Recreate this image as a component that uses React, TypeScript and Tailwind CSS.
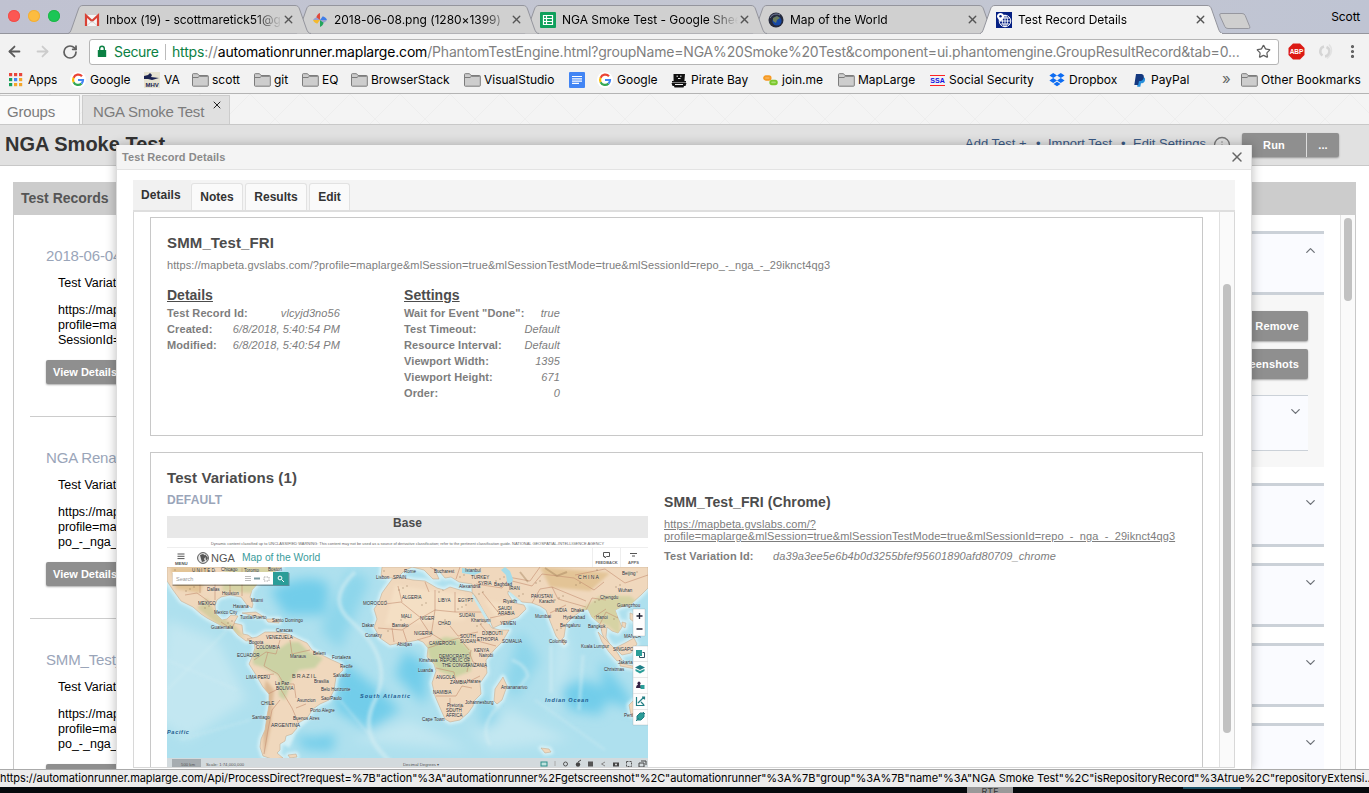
import React from "react";
import { ArrowLeft, ArrowRight, RotateCw, Star, MoreVertical, ChevronDown, ChevronUp, X, Info } from "lucide-react";

const ui = "font-['Inter','Noto_Sans',sans-serif]";

function TabShape({ active }: { active?: boolean }) {
  return (
    <svg className="absolute left-0 top-0 h-[30px] w-[244px]" viewBox="0 0 244 30">
      <path
        d="M0 28.5 C2 28 2.5 26.5 3.5 24 L10.5 4 C11.5 1.5 12.5 .5 15 .5 H227 C229.500 .5 230.500 1.500 231.500 4 L238.500 24 C239.500 26.500 240.500 28.500 243 28.500"
        fill={active ? "#f2f2f2" : "#d0d0d0"}
        stroke="#94959d"
      />
      {active && <path d="M1 29h241" stroke="#f2f2f2" strokeWidth="2" />}
    </svg>
  );
}

type TabProps = { z: string; title: string; icon: React.ReactNode; active?: boolean };
function BrowserTab({ z, title, icon, active }: TabProps) {
  return (
    <div className={`relative h-[30px] w-[228px] shrink-0 ${z}`}>
      <TabShape active={active} />
      <div className="relative flex h-[29px] items-center pl-[16px]">
        <span className="flex w-[22px] shrink-0">{icon}</span>
        <span className="w-[176px] shrink-0 overflow-hidden whitespace-nowrap text-[12px] leading-[16px] tracking-[-0.03px] text-black [mask-image:linear-gradient(90deg,#000_84%,transparent)]">
          {title}
        </span>
        <X className="size-[13px] shrink-0 text-[#555]" strokeWidth={2.5} />
      </div>
    </div>
  );
}

const Gmail = () => (
  <svg width="16" height="16" viewBox="0 0 16 16">
    <path d="M1 3h14v11H1z" fill="#f5f5f5" />
    <path d="M2 14V3.500l6 5.500 6-5.500V14" fill="none" stroke="#d94235" strokeWidth="2.200" />
    <path d="M3 13.500L8 9l5 4.500" fill="none" stroke="#c9c9c9" strokeWidth=".8" />
  </svg>
);
const Pinwheel = () => (
  <svg width="16" height="16" viewBox="0 0 16 16">
    <path d="M8 1v7L4.300 5.200C5 3 6.300 1.600 8 1z" fill="#e04a3a" />
    <path d="M15 8H8l2.800-3.700C13 5 14.400 6.300 15 8z" fill="#3f7de8" />
    <path d="M8 15V8l3.700 2.800C11 13 9.700 14.400 8 15z" fill="#22a45c" />
    <path d="M1 8h7l-2.800 3.700C3 11 1.600 9.700 1 8z" fill="#f4b92e" />
    <path d="M8 8L4.300 5.200Q2 6.500 1 8zM8 8l3.700 2.800Q14 9.500 15 8z" fill="#5f6fd0" opacity=".5" />
  </svg>
);
const Sheet = () => (
  <svg width="16" height="16" viewBox="0 0 16 16">
    <rect width="16" height="16" rx="1" fill="#10a05c" />
    <path d="M3.500 3.500h9v9h-9zM3.500 6.500h9M3.500 9.500h9M6.500 3.500v9" fill="none" stroke="#fff" strokeWidth="1.200" />
  </svg>
);
const Planet = () => (
  <svg width="16" height="16" viewBox="0 0 16 16">
    <circle cx="8" cy="8" r="7.500" fill="#252a3c" />
    <circle cx="9" cy="9" r="4.600" fill="#1647a3" />
    <path d="M5 6l4-2 3 2-3 2-1 3-3-2z" fill="#6b7c5d" />
    <path d="M2 6C4 2 9 1 12 3" fill="none" stroke="#7882a3" />
  </svg>
);
const PinGlobe = () => (
  <svg width="16" height="16" viewBox="0 0 16 16">
    <rect width="16" height="16" fill="#062083" />
    <g fill="none" stroke="#fff" strokeWidth=".9">
      <circle cx="9" cy="9" r="5.800" />
      <path d="M3.500 9h11.500M4.500 12h9M5 6h9M9 3v12M9 3c-3.500 3-3.500 9 0 12M9 3c3.500 3 3.500 9 0 12" />
    </g>
    <path d="M4.500 1C2.500 1 1 2.500 1 4.300 1 6.500 4.500 9.500 4.500 9.500S8 6.500 8 4.300C8 2.500 6.500 1 4.500 1z" fill="#fff" />
    <circle cx="4.500" cy="4.300" r="1.200" fill="#062083" />
  </svg>
);
const GoogleG = () => (
  <svg width="16" height="16" viewBox="0 0 16 16">
    <circle cx="8" cy="8" r="8" fill="#fff" />
    <g fill="none" strokeWidth="2.200">
      <path d="M12 4.300A5 5 0 0 0 3.600 5.800" stroke="#ea4335" />
      <path d="M3.600 5.800a5 5 0 0 0 0 4.400" stroke="#fbbc05" />
      <path d="M3.600 10.200A5 5 0 0 0 11.500 11.600" stroke="#34a853" />
      <path d="M8 8h5a5 5 0 0 1-1.500 3.600" stroke="#4285f4" />
    </g>
  </svg>
);
const Folder = () => (
  <svg width="17" height="14" viewBox="0 0 17 14">
    <path d="M.5 12.500V1.500q0-.8.800-.8H5.500L7 2.500h8.500q.8 0 .8.800v9.200q0 .7-.8.700H1.300q-.8 0-.8-.7z" fill="#cdcdcd" stroke="#7c7c7c" />
    <path d="M1 4.500h5L7.300 3.300h8.500" fill="none" stroke="#7c7c7c" />
  </svg>
);
const AppsGrid = () => (
  <svg width="14" height="14" viewBox="0 0 14 14">
    {["#e8453c", "#e8453c", "#e8453c", "#19a05b", "#4285f4", "#f4a62a", "#19a05b", "#f4a62a", "#f4a62a"].map((c, i) => (
      <rect key={i} x={(i % 3) * 5} y={Math.floor(i / 3) * 5} width="3.200" height="3.200" fill={c} />
    ))}
  </svg>
);
const Mhv = () => (
  <svg width="16" height="16" viewBox="0 0 16 16">
    <rect width="16" height="16" fill="#e6e3d2" />
    <path d="M0 4l4-1 2-2 2 2-1 2 8 1-7 2-4-1-4 0z" fill="#1b2350" />
    <text x="1.500" y="14.500" fontSize="6" fontWeight="700" fontFamily="Liberation Sans" fill="#1b2350">MHV</text>
  </svg>
);
const DocIcon = () => (
  <svg width="16" height="16" viewBox="0 0 16 16">
    <rect width="16" height="16" rx="1" fill="#4285f4" />
    <path d="M3 4.500h10M3 6.800h10M3 9.100h10M3 11.400h7" stroke="#fff" strokeWidth="1.200" />
  </svg>
);
const Ship = () => (
  <svg width="16" height="15" viewBox="0 0 16 15">
    <path d="M2.500 1h11.500l-.6 7H2.600zM1 8h14v1.500H1zM.5 10h15l-1 3H13l-.5 1.500H3.500L3 13H1.500z" fill="#111" />
    <path d="M5.500 3.200h1.500M9 3.200h1.500M7 5.500h2.500M4 11.500h8" stroke="#f2f2f2" />
  </svg>
);
const JoinMe = () => (
  <svg width="15" height="11" viewBox="0 0 15 11">
    <rect x="1.100" y="1.300" width="6.500" height="3.400" rx="1.700" fill="#f9b45f" stroke="#f59a23" strokeWidth="1.900" />
    <rect x="7.300" y="5.600" width="6.500" height="3.600" rx="1.700" fill="#a9dd70" stroke="#7bc72c" strokeWidth="1.900" />
  </svg>
);
const Ssa = () => (
  <span className="flex h-[11px] w-[15px] items-center justify-center border-y border-[#f22] text-[7px] font-bold leading-[7px] text-[#1010e0] font-['Liberation_Sans',sans-serif]">
    SSA
  </span>
);
const Dropbox = () => (
  <svg width="16" height="14" viewBox="0 0 16 14" fill="#0d6cf2">
    <path d="M4.200 0L8 2.500 4.200 5 .4 2.500zM11.800 0l3.800 2.500L11.800 5 8 2.500zM4.200 5L8 7.500 4.200 10 .4 7.500zM11.800 5l3.800 2.500-3.800 2.500L8 7.500zM4.500 11L8 8.700 11.500 11 8 13.300z" />
  </svg>
);
const Paypal = () => (
  <svg width="12" height="13" viewBox="0 0 12 13">
    <path d="M4 3h5c2 .3 2.500 2 1.800 4C10.200 8.800 9 9.300 7 9.300L6.300 12.800H3.200z" fill="#2790dc" />
    <path d="M2 0h5.500C9.500.3 10.200 1.800 9.700 4 9 6.500 7.500 7 5 7l-.8 4H.3z" fill="#14387f" />
  </svg>
);

type BM = { label: string; icon: React.ReactNode; gap: string; w: string };
const bookmarks: BM[] = [
  { label: "Apps", icon: <AppsGrid />, gap: "gap-[5px]", w: "w-[61px]" },
  { label: "Google", icon: <GoogleG />, gap: "gap-[4px]", w: "w-[74px]" },
  { label: "VA", icon: <Mhv />, gap: "gap-[4px]", w: "w-[48px]" },
  { label: "scott", icon: <Folder />, gap: "gap-[3px]", w: "w-[62px]" },
  { label: "git", icon: <Folder />, gap: "gap-[3px]", w: "w-[48px]" },
  { label: "EQ", icon: <Folder />, gap: "gap-[3px]", w: "w-[49px]" },
  { label: "BrowserStack", icon: <Folder />, gap: "gap-[3px]", w: "w-[113px]" },
  { label: "VisualStudio", icon: <Folder />, gap: "gap-[3px]", w: "w-[105px]" },
  { label: "", icon: <DocIcon />, gap: "", w: "w-[28px]" },
  { label: "Google", icon: <GoogleG />, gap: "gap-[4px]", w: "w-[74px]" },
  { label: "Pirate Bay", icon: <Ship />, gap: "gap-[4px]", w: "w-[92px]" },
  { label: "join.me", icon: <JoinMe />, gap: "gap-[4px]", w: "w-[75px]" },
  { label: "MapLarge", icon: <Folder />, gap: "gap-[3px]", w: "w-[92px]" },
  { label: "Social Security", icon: <Ssa />, gap: "gap-[4px]", w: "w-[119px]" },
  { label: "Dropbox", icon: <Dropbox />, gap: "gap-[4px]", w: "w-[85px]" },
  { label: "PayPal", icon: <Paypal />, gap: "gap-[5px]", w: "w-[87px]" },
];

function Chrome() {
  return (
    <header className={`${ui} shrink-0`}>
      <div className="relative flex h-[34px] items-start bg-[linear-gradient(100deg,#c0c2d1,#c4c7d2_60%,#bfc4d3)] pt-[5px] shadow-[inset_0_-1px_#94959d]">
        <div className="flex w-[68px] shrink-0 gap-[8px] pl-[8px] pt-[5px]">
          <i className="size-[12px] rounded-full bg-[#fc5753] ring-1 ring-inset ring-[#f04f4b]" />
          <i className="size-[12px] rounded-full bg-[#fdbc40] ring-1 ring-inset ring-[#f0ae3a]" />
          <i className="size-[12px] rounded-full bg-[#1bc656] ring-1 ring-inset ring-[#1fb849]" />
        </div>
        <BrowserTab z="z-[4]" title="Inbox (19) - scottmaretick51@gmail" icon={<Gmail />} />
        <BrowserTab z="z-[3]" title="2018-06-08.png (1280×1399)" icon={<Pinwheel />} />
        <BrowserTab z="z-[2]" title="NGA Smoke Test - Google Sheets" icon={<Sheet />} />
        <BrowserTab z="z-[1]" title="Map of the World" icon={<Planet />} />
        <BrowserTab z="z-[5]" title="Test Record Details" icon={<PinGlobe />} active />
        <svg className="ml-[10px] mt-[7px] h-[18px] w-[36px]" viewBox="0 0 36 18">
          <path d="M3 1.500H24q2.500 0 3.200 2l4.500 11q.8 2-1 2H10q-2.500 0-3.200-2L2 4Q1 1.500 3 1.500z" fill="#cfcfcf" stroke="#96979f" />
        </svg>
        <span className="ml-auto mr-[9px] mt-[4px] text-[12px] leading-[16px] tracking-[-0.1px]">Scott</span>
      </div>
      <div className="flex h-[35px] items-center bg-[#f2f2f2] pl-[6px]">
        <ArrowLeft className="size-[17px] text-[#5a5a5a]" strokeWidth={2.500} />
        <ArrowRight className="ml-[11px] size-[17px] text-[#ccc]" strokeWidth={2.500} />
        <RotateCw className="ml-[11px] size-[16px] text-[#5f5f5f]" strokeWidth={2.600} />
        <div className="ml-[11px] flex h-[26px] w-[1190px] items-center rounded-[3px] border border-[#b5b5b5] bg-white pl-[7px]">
          <svg width="10" height="13" viewBox="0 0 10 13">
            <rect x=".8" y="5" width="8.400" height="7" rx=".6" fill="#0b8043" />
            <path d="M2.700 5.500V3.600a2.300 2.300 0 0 1 4.600 0v1.900" fill="none" stroke="#0b8043" strokeWidth="1.400" />
          </svg>
          <span className="ml-[7px] w-[51px] text-[14px] leading-[18px] tracking-[-0.35px] text-[#0b8043]">Secure</span>
          <i className="h-[16px] w-px bg-[#bbb]" />
          <span className="ml-[6px] w-[1076px] whitespace-nowrap text-[14px] leading-[18px] tracking-[-0.185px] text-[#7f7f7f]">
            <span className="text-[#0b8043]">https</span>://<span className="text-black">automationrunner.maplarge.com</span>
            /PhantomTestEngine.html?groupName=NGA%20Smoke%20Test&amp;component=ui.phantomengine.GroupResultRecord&amp;tab=0...
          </span>
          <Star className="ml-[8px] size-[15px] text-[#606060]" strokeWidth={2} />
        </div>
        <svg className="ml-[9px] size-[17px]" viewBox="0 0 17 17">
          <path d="M5 .5h7L16.500 5v7L12 16.500H5L.5 12V5z" fill="#dc1a14" />
          <text x="8.500" y="11" fontSize="6.500" fontWeight="700" textAnchor="middle" fill="#fff" fontFamily="Liberation Sans">ABP</text>
        </svg>
        <svg className="ml-[11px] size-[17px]" viewBox="0 0 17 17" fill="none" stroke="#d5d5d5" strokeWidth="2.500">
          <path d="M8 3.500a5 5 0 0 0-1.500 9M9 13.500a5 5 0 0 0 1.500-9.500" />
          <path d="M13 1.500c4 4 3 10-2 14" stroke="#e2e2e2" strokeWidth="1.500" />
        </svg>
        <MoreVertical className="ml-[11px] size-[17px] text-[#5a5a5a]" strokeWidth={2.500} />
      </div>
      <nav className="flex h-[25px] items-center border-b border-[#b4b4b4] bg-[#f2f2f2] pb-[2px] pl-[9px] text-[12px] leading-[16px] text-black">
        {bookmarks.map((b, i) => (
          <div key={i} className={`flex shrink-0 items-center whitespace-nowrap ${b.gap} ${b.w}`}>
            {b.icon}
            <span>{b.label}</span>
          </div>
        ))}
        <span className="-mt-[3px] w-[20px] shrink-0 pl-[1px] text-[15px] leading-[10px] text-[#666]">»</span>
        <div className="flex items-center gap-[3px] whitespace-nowrap tracking-[0.08px]">
          <Folder />
          <span>Other Bookmarks</span>
        </div>
      </nav>
    </header>
  );
}

function RecordItem({ title, last }: { title: string; last: string }) {
  return (
    <div className="h-[202px] shrink-0 whitespace-nowrap border-b border-[#ccc] pl-[16px] pt-[32px]">
      <div className="text-[15px] leading-[18px] tracking-[-0.15px] text-[#9aa5b9]">{title}</div>
      <div className="mt-[11px] pl-[12px] text-[12.5px] leading-[15px] text-black">
        <div>Test Variations: 1</div>
        <div className="mt-[12px]">https://mapbeta.gvslabs.com/?</div>
        <div>profile=maplarge&amp;mlSession=true</div>
        <div>{last}</div>
      </div>
      <div className="mt-[12px] h-[24px] w-[90px] rounded-[2px] bg-[#8f8f8f] pl-[7px] text-[11px] font-bold leading-[24px] text-white shadow-[0_1px_2px_#0005]">
        View Details
      </div>
    </div>
  );
}

function Fold({ up }: { up?: boolean }) {
  const Icon = up ? ChevronUp : ChevronDown;
  return (
    <div className="flex h-[64px] shrink-0 justify-end border-y-[3px] border-[#cbd1d8] bg-[#fafbff] pr-[6px] pt-[9px]">
      <Icon className="size-[15px] text-[#6d7178]" strokeWidth={2} />
    </div>
  );
}

const btn = "rounded-[2px] bg-[#8f8f8f] text-[11px] tracking-[0.15px] font-bold text-white shadow-[0_1px_2px_#0005]";

function Page() {
  return (
    <main className="flex min-h-0 flex-1 flex-col overflow-hidden bg-white">
      <div className="relative flex h-[31px] shrink-0 items-end gap-[2px] border-b border-[#c8c8c8] bg-[#f4f4f4] text-[15px] tracking-[-0.2px] text-[#7c7c7c]">
        <svg className="absolute inset-0 h-[30px] w-full">
          <defs>
            <pattern id="weave" width="50" height="50" patternUnits="userSpaceOnUse">
              <path d="M0 0l50 50M50 0L0 50" stroke="#eeeeee" fill="none" />
            </pattern>
          </defs>
          <rect width="1369" height="30" fill="url(#weave)" />
        </svg>
        <div className="relative h-[29px] w-[80px] border-r border-t border-[#ccc] bg-[#fafafa] pl-[7px] leading-[31px]">Groups</div>
        <div className="relative flex h-[29px] w-[148px] border-x border-t border-[#ccc] bg-[#e0e0e0] pl-[10px] leading-[31px]">
          <span>NGA Smoke Test</span>
          <X className="ml-[7px] mt-[3px] size-[12px] text-[#222]" strokeWidth={2} />
        </div>
      </div>
      <div className="flex h-[41px] shrink-0 border-b border-[#c8c8c8] bg-[#e1e1e1] pl-[5px]">
        <h1 className="w-[960px] text-[20px] font-bold leading-[39px] text-[#333]">NGA Smoke Test</h1>
        <div className="flex w-[277px] text-[13px] leading-[38px] text-[#3b5a85]">
          <span className="w-[71px]">Add Test +</span>
          <span className="w-[12px]">•</span>
          <span className="w-[73px]">Import Test</span>
          <span className="w-[12px]">•</span>
          <span className="w-[80px]">Edit Settings</span>
          <Info className="mt-[11px] size-[18px] text-[#777]" strokeWidth={1.700} />
        </div>
        <div className={`${btn} mt-[8px] flex h-[24px] w-[97px] leading-[24px]`}>
          <span className="w-[65px] border-r border-[#ddd] text-center">Run</span>
          <span className="flex-1 text-center">...</span>
        </div>
      </div>
      <section className="ml-[13px] mt-[16px] flex min-h-0 w-[1343px] flex-1 flex-col">
        <div className="h-[33px] shrink-0 bg-[#ccc] pl-[8px] text-[14px] font-bold leading-[33px] text-[#555]">Test Records</div>
        <div className="flex min-h-0 flex-1 overflow-hidden border-x border-[#c8c8c8]">
          <div className="flex w-[400px] flex-col pl-[16px]">
            <RecordItem title="2018-06-04 Smoke" last="SessionId=repo_-_nga" />
            <RecordItem title="NGA Rename Test" last="po_-_nga_-_record" />
            <RecordItem title="SMM_Test_FRI" last="po_-_nga_-_29iknct4qg3" />
          </div>
          <div className="ml-auto flex w-[400px] flex-col pt-[16px]">
            <Fold up />
            <div className="flex h-[172px] shrink-0 flex-col items-end bg-[#f7f7f7] px-[16px] pt-[16px] leading-[30px]">
              <div className={`${btn} h-[30px] px-[9px]`}>Remove</div>
              <div className={`${btn} mt-[8px] h-[30px] px-[9px]`}>Get Screenshots</div>
              <div className="mt-[16px] flex h-[56px] w-full justify-end border-y border-[#cbd1d8] bg-[#fafbff] pr-[5px] pt-[8px]">
                <ChevronDown className="size-[15px] text-[#6d7178]" strokeWidth={2} />
              </div>
            </div>
            <div className="mt-[16px] flex flex-col gap-[16px]">
              <Fold />
              <Fold />
              <Fold />
              <Fold />
            </div>
          </div>
          <div className="ml-[16px] w-[15px] shrink-0 border-l border-[#e2e2e2] bg-[#fafafa] pl-[3px] pt-[3px]">
            <div className="h-[83px] w-[8px] rounded-full bg-[#c1c1c1]" />
          </div>
        </div>
      </section>
    </main>
  );
}

type L = [number, number, string, number?];
const cities: L[] = [
  [192, 571, "U N I T E D"], [221, 570, "Chicago"], [244, 571, "Toronto"], [268, 570, "Boston"], [207, 590, "Dallas"], [222, 594, "Houston"], [198, 604, "MEXICO"],
  [214, 613, "Mexico City"], [251, 601, "Miami"], [233, 607, "Havana"], [240, 618, "Tuxtla/Puerto"], [272, 621, "Santo Domingo"], [211, 628, "Guatemala"], [276, 631, "Caracas"], [266, 638, "VENEZUELA"],
  [249, 643, "Bogota"], [256, 648, "COLOMBIA"], [237, 656, "ECUADOR"], [290, 657, "Manaus"], [313, 654, "Belem"], [332, 658, "Fortaleza"], [340, 667, "Recife"],
  [333, 676, "Salvador"], [246, 678, "LIMA  PERU"], [275, 684, "La Paz"], [276, 689, "BOLIVIA"], [314, 682, "Brasilia"], [321, 690, "Belo Horizonte"], [321, 699, "Sao/Paulo"], [297, 701, "Asuncion"],
  [261, 704, "CHILE"], [310, 711, "Porto Alegre"], [252, 718, "Santiago"], [293, 719, "Buenos Aires"], [271, 726, "ARGENTINA", 5], [363, 604, "MOROCCO"],
  [376, 578, "Lisbon"], [393, 578, "SPAIN"], [404, 572, "Rome"], [434, 572, "Bucharest"], [465, 571, "Istanbul"], [471, 578, "TURKEY"], [402, 598, "ALGERIA"], [438, 601, "LIBYA"], [458, 601, "EGYPT"],
  [401, 617, "MALI"], [420, 619, "NIGER"], [438, 624, "CHAD"], [459, 616, "SUDAN"], [362, 626, "Dakar"], [365, 636, "Conakry"], [392, 626, "Bamako"], [397, 645, "Abidjan"], [414, 634, "NIGERIA"], [429, 644, "CAMEROON"],
  [460, 637, "SOUTH"], [460, 642, "SUDAN"], [477, 640, "ETHIOPIA"], [482, 634, "DJIBOUTI"], [502, 642, "SOMALIA"], [474, 651, "KENYA"], [479, 656, "Nairobi"], [439, 657, "DEMOCRATIC"], [440, 661, "REPUBLIC OF"], [442, 666, "THE CONGO"], [465, 666, "TANZANIA"],
  [419, 661, "Kinshasa"], [418, 671, "Luanda"], [436, 678, "ANGOLA"], [450, 683, "ZAMBIA"], [467, 682, "Harare"], [433, 693, "NAMIBIA"], [447, 706, "Pretoria"], [465, 703, "Johannesburg"], [446, 711, "SOUTH"], [446, 716, "AFRICA"],
  [422, 720, "Cape Town"], [501, 688, "Antananarivo"], [459, 587, "Alexandria"], [478, 584, "SYRIA"], [494, 585, "Baghdad"], [509, 589, "IRAN"], [503, 602, "Riyadh"], [498, 609, "SAUDI"], [498, 614, "ARABIA"], [471, 621, "Khartoum"], [500, 624, "YEMEN"],
  [531, 597, "PAKISTAN"], [539, 602, "Karachi"], [535, 617, "Mumbai"], [555, 611, "INDIA"], [571, 611, "Dhaka"], [563, 618, "Hyderabad"], [560, 626, "Bengaluru"], [549, 642, "Colombo"], [578, 578, "C H I N A", 5], [622, 574, "Beijing"], [618, 591, "Wuhan"], [600, 598, "Chengdu"],
  [617, 606, "Guangzhou"], [596, 618, "Hanoi"], [588, 627, "Bangkok"], [581, 647, "Kuala Lumpur"], [613, 650, "SINGAPORE"], [618, 663, "Jakarta"], [604, 670, "Christmas"], [624, 637, "MANILA"], [624, 716, "Perth"],
];
const dots = Array.from({ length: 110 }, (_, i) => ({ x: 175 + ((i * 97) % 466), y: 570 + ((i * 53) % 62) }));

function WorldMap() {
  return (
    <svg className="block h-[202px] w-[481px]" viewBox="167 567 481 202">
      <defs>
        <filter id="soft" x="-10%" y="-10%" width="120%" height="120%"><feGaussianBlur stdDeviation="6" /></filter>
        <filter id="shelf"><feGaussianBlur stdDeviation="1.600" /></filter>
        <path id="na" d="M167 567V581L173 590 181 601 193 607 201 614 207 618 220 625 232 628 238 635 246 641 255 640 248 635 243 634 242 625 234 623 238 616 231 615 227 619 222 620 216 614 215 606 217 600 221 597 230 595 241 597 247 605 252 608 253 604 250 597 252 590 258 583 266 576 274 572 282 567Z" />
        <path id="sa" d="M247 639L257 637 265 632 275 632 288 634 296 638 307 643 312 650 320 654 332 660 341 664 343 670 336 677 334 690 329 700 320 704 313 709 307 718 300 722 296 724 297 728 292 734 286 736 285 741 280 744 280 750 277 753 283 758 272 759 263 756 260 747 261 739 265 730 267 716 269 705 269 694 263 687 256 675 249 664 252 657 255 648 254 642Z" />
        <path id="af" d="M393 578L387 586 382 593 379 602 374 609 377 619 374 627 380 638 390 645 400 643 408 642 418 640 423 642 428 648 427 657 434 664 436 671 432 683 435 696 441 710 445 719 450 722 460 720 468 713 473 706 474 701 481 694 480 683 487 673 486 660 494 650 502 642 509 630 500 630 492 628 486 620 481 609 475 596 471 592 460 590 450 587 444 590 437 588 432 585 425 581 413 580 403 578Z" />
        <path id="eu" d="M382 567H648V588L641 595 631 604 621 607 615 610 618 618 622 627 618 633 612 631 607 627 606 637 612 649 606 643 602 633 600 624 592 617 588 609 581 611 573 617 566 624 564 637 560 641 556 636 550 621 546 610 540 606 532 603 522 602 514 596 508 591 508 594 514 603 524 605 526 609 518 617 506 622 493 628 490 621 483 610 476 597 472 592 472 584 459 582 451 577 445 578 440 572 434 568 439 579 433 579 424 570 412 567 404 571 397 578 389 578 381 576Z" />
        <g id="isl">
          <path d="M503 677L507 686 502 700 497 704 494 701 495 689Z" />
          <path d="M598 632L604 638 615 649 622 660 617 661 609 652 602 642ZM615 648L625 643 634 638 637 644 631 653 622 655ZM620 663L641 668 641 670 620 666ZM637 654l4-3 4 3-4 3 2 6-4-3zM648 690l-11 7-8 8 2 10 6 3 11-4Z" />
          <path d="M242 613L256 612 264 617 255 616ZM266 619L279 619 279 623 268 622ZM288 755l8-1 1 3-7 1zM541 748l8 1 2 3-6 1zM622 622l4 1-1 5-3-2zM630 613l5 2-1 7-4-3zM564 639l2 4-2 2-2-4z" />
        </g>
        <clipPath id="landclip"><use href="#na" /><use href="#sa" /><use href="#af" /><use href="#eu" /></clipPath>
      </defs>
      <rect x="167" y="567" width="481" height="202" fill="#aee0ee" />
      <g filter="url(#soft)">
        <path d="M270 590q40-20 60-5l-5 30-40 0zM340 660q30 20 60 50l-30 20-35-20zM295 735q20 5 40-2l-2 18-30-2zM405 650l22 15-2 40-30-30zM560 690q30-20 50 5l-10 20-30-5zM600 660l25 30 10 20-30-10z" fill="#72cdea" />
        <path d="M320 585q25 5 15 30l15 20-5-40zM470 730l40-20 60 30-80 10zM167 620l50 20 30 60-60 40-30-20zM560 600l10 60-20 60zM350 740l60-20 60 30z" fill="#c2e7f1" />
        <path d="M350 570l20 10-30 70-20-20zM520 630l20 30-25 40-10-20zM480 690l20 30-20 10z" fill="#8dd6eb" />
      </g>
      <g fill="none" stroke="#d6eef3" opacity=".6" filter="url(#shelf)">
        <path d="M355 572Q325 600 352 622Q395 660 375 700T400 768" strokeWidth="4" />
        <path d="M512 660q14 5 16 16l-9 12M551 645v48M583 655l-4 55M500 705q-22 20-10 40" strokeWidth="2.500" />
        <path d="M167 660l70 30M167 690l60-60M180 740l70-20M535 700l70 50M340 700l50 60" strokeWidth="1.200" />
      </g>
      <g fill="none" stroke="#dff4f8" strokeWidth="5" strokeLinejoin="round" opacity=".8" filter="url(#shelf)">
        <use href="#na" /><use href="#sa" /><use href="#af" /><use href="#eu" /><use href="#isl" />
        <path d="M284 745l8-18 14-12" strokeWidth="12" />
      </g>
      <g fill="#f0d8bd" stroke="#bfa488" strokeWidth=".5">
        <use href="#na" /><use href="#sa" /><use href="#af" /><use href="#eu" /><use href="#isl" />
      </g>
      <g clipPath="url(#landclip)">
        <g filter="url(#shelf)">
          <path d="M253 650l14-6 10 6 12-8 10 0 10 10 14 6-8 10-16 2-8 10-6 20-6-4 0-20-14-8-12-4z" fill="#cbd2a4" />
          <path d="M427 645l18-8 14 2 12 12 0 20-16 6-16-6-10-14z" fill="#cbd3a2" />
          <path d="M225 567l55 0-14 14-14 12-30-2zM580 610l20-14 30 0 10 8-20 12 0 20-12-10-12-5z" fill="#d6d3a4" />
          <path d="M197 608l10-10 8 14 20 14 10 12-8-4-20-10z" fill="#d5cda0" />
          <path d="M262 700l4-20 8 10-4 40-6 26z" fill="#dcb994" />
          <path d="M540 567l70 6-20 18-40-4zM170 567l40 0-10 26-24-4z" fill="#e3c496" />
          <path d="M395 585l70 10 0 25-80 5zM484 600l30 5-16 16z" fill="#f4dfc4" />
        </g>
        <g fill="none" stroke="#c58f72" strokeWidth=".6">
          <path d="M385 604l16-2 20 16 14-8v-20M420 618l-18 12-24-2M435 610l20 2v-20M455 612h28M450 626l8 10 20-4M435 610l-4 26-14 4M403 630l4 12M392 628l2 14M421 620l8 12 16 10 14-4 10 12M446 642l-18 6M436 668l18 4 2 10h12l12-6M471 650l-4 22M487 668l-14-6-4-10M436 696h20l6-10 10 2M450 698v14l14-6M474 640l22 6M480 624l10 12M402 602l-4-16M425 582l4 10M508 614l-18 4" />
          <path d="M254 660l12-8 10 2 4-14M268 652l-4 14 14 8 6 10 10 0 2 14M268 694l12-6 12 20 6 14M280 700l-8 10-4 20-4 24M290 640l2 14 18-4M296 708l10-4M258 676l16-2" />
          <path d="M185 595l12-2 14 10 6 4M200 593v-24M215 600v-30M230 595v-26M242 596v-28M250 582h-60M232 628l4-8M221 622l6 4" />
          <path d="M476 584l26 4 6-8 24 6 10-12 32 4 20 12 10-8M532 603l8-14 12-2 6 12 28 8M586 610l6-12 14 2M552 587l34 14M600 624l6-12 12 6M498 612l-16-20M550 613l16-8M540 567l-10 14-22-4M575 575l30-6 20 14 23-8M594 617l12-8M430 567l10 6M460 567l-4 12" />
        </g>
        <g fill="#8a6d50" opacity=".5">{dots.map((d, i) => <circle key={i} cx={d.x} cy={d.y} r=".8" />)}</g>
        <path d="M545 568l12 8 10-4M520 572l8 10" stroke="#9c7a55" strokeWidth="2" opacity=".4" fill="none" />
      </g>
      <path d="M505 567l5 4 3 8-2 8-4-5-1-7-5-5zM462 568l12 2 8 2-8 3-12-2z" fill="#a3dcea" />
      <path d="M509 591l6 5 6 5-4 0-7-6zM473 594l9 14 9 16-3 0-8-14-8-14z" fill="#c6e8ee" />
      <g fill="#25282e" fontFamily="Liberation Sans" fontSize="4.500" stroke="#fff" strokeWidth=".4" paintOrder="stroke" strokeOpacity=".4">
        {cities.map(([x, y, t, s], i) => <text key={i} x={x} y={y + 1} fontSize={s ?? 4.500}>{t}</text>)}
      </g>
      <text x="292" y="678" fontSize="5.500" letterSpacing="1" fill="#444" fontFamily="Liberation Sans">BRAZIL</text>
      <g fill="#215a8e" fontFamily="Liberation Sans" fontStyle="italic" fontWeight="700" fontSize="5.500" letterSpacing="1">
        <text x="360" y="698">South Atlantic</text>
        <text x="545" y="702" letterSpacing=".8">Indian Ocean</text>
        <text x="167" y="734" letterSpacing=".7">Pacific</text>
      </g>
      <rect x="172.500" y="573" width="117" height="13" fill="#0005" />
      <rect x="172.500" y="572" width="101" height="12.500" fill="#fff" />
      <rect x="273" y="572" width="15.500" height="13" fill="#2a9d98" />
      <circle cx="280" cy="578" r="1.900" fill="none" stroke="#fff" /><path d="M281.500 579.500l2.500 2.500" stroke="#fff" />
      <text x="176" y="581" fontSize="5.500" fill="#999" fontFamily="Liberation Sans">Search</text>
      <path d="M245 576.500h6M245 578.500h6M245 580.500h6" stroke="#bbb" /><path d="M254 578.500h6" stroke="#7a9aa0" strokeWidth="2" />
      <path d="M264 577h5v4h-5z" fill="none" stroke="#aaa" strokeDasharray="1.500 1" />
      <path d="M633 609h12v27h-12zM633 646h15v79h-15z" fill="#fdfdfd" stroke="#8886" strokeWidth=".6" />
      <path d="M636.500 616h6M639.500 613v6M636.500 629h6" stroke="#223" strokeWidth="1.300" />
      <path d="M633 661.500h15M633 677.500h15M633 693.500h15M633 709.500h15" stroke="#ddd" strokeWidth=".7" />
      <path d="M636 650h6v6h-6z" fill="#2a9d98" /><path d="M642.500 652.500h2v5h-5v-1.500" fill="none" stroke="#356" />
      <path d="M640 665l5 2.500-5 2.500-5-2.500z" fill="#1d7f87" /><path d="M635.500 669l4.500 2 4.500-2v2l-4.500 2.500-4.500-2.500z" fill="#2a9d98" />
      <path d="M636 688q0-3 2-3.500a1.600 1.600 0 1 1 2 0q1 .5 1 3.500z" fill="#324" /><path d="M640.500 685h4v4h-4z" fill="#2a9d98" />
      <path d="M636.500 697v8.500h8M638 703l6-6M642 697h2.500v2.500M641 702l3 3" fill="none" stroke="#237f84" strokeWidth="1.200" />
      <path d="M640 713l4 0 0 4-3 3h-4v-4zM636 721l3-3M643 712l2 2" fill="#2a9d98" stroke="#237f84" />
      <rect x="167" y="758" width="481" height="11" fill="#d3dadd" />
      <rect x="172" y="759" width="29" height="10" fill="#a6acb0" />
      <g fontFamily="Liberation Sans" fontSize="4.300" fill="#555">
        <text x="181" y="765.500">500 km</text><text x="206" y="765.500">Scale: 1:74,000,000</text><text x="403" y="765.500">Decimal Degrees ▾</text>
      </g>
      <rect x="541" y="762" width="6" height="4" fill="#bfe3df" stroke="#2a8d88" />
      <path d="M555 761v5" stroke="#aaa" />
      <circle cx="565.500" cy="764" r="2" fill="none" stroke="#555" /><circle cx="578" cy="764.500" r="2.200" fill="#444" /><path d="M578 762l3-2" stroke="#444" />
      <path d="M588 761.500h5v5h-5z" fill="#555" /><path d="M605 762l-3.500 2 3.500 2" stroke="#888" fill="none" /><path d="M613 762.500h6v4h-6z" fill="#444" /><circle cx="616" cy="764.500" r="1" fill="#ddd" />
      <path d="M626.500 761.500h5v5h-5z" fill="none" stroke="#555" strokeDasharray="2 1" /><path d="M639 763h5v4h-5zM641 761h5v4" fill="none" stroke="#444" />
    </svg>
  );
}

function MapShot() {
  return (
    <div className="w-[481px] bg-white font-['Liberation_Sans',sans-serif] tracking-normal">
      <div className="h-[9px] overflow-hidden whitespace-nowrap text-center text-[3.940px] leading-[11px] text-[#666]">
        Dynamic content classified up to UNCLASSIFIED WARNING: This content may not be used as a source of derivative classification; refer to the pertinent classification guide. NATIONAL GEOSPATIAL-INTELLIGENCE AGENCY
      </div>
      <div className="flex h-[20px] items-center border-t border-[#eee]">
        <svg className="h-[19px] w-[30px] shrink-0" viewBox="0 0 30 19">
          <path d="M10.500 6h7M10.500 8.300h7M10.500 10.600h7" stroke="#555" />
          <text x="8" y="16.500" fontSize="4.300" fontWeight="700" fill="#555" fontFamily="Liberation Sans">MENU</text>
        </svg>
        <svg className="size-[12px] shrink-0" viewBox="0 0 12 12">
          <circle cx="6" cy="6" r="5.400" fill="#e8e8e8" stroke="#555" />
          <path d="M3 3l3-1 3 2-2 3 1 2-3 1-1-3zM8 2l3 4-2 3z" fill="#555" />
        </svg>
        <span className="ml-[2px] w-[31px] shrink-0 text-[11px] leading-[14px] text-[#555]">NGA</span>
        <span className="w-[346px] shrink-0 text-[10.300px] leading-[14px] text-[#3a9c9c]">Map of the World</span>
        <svg className="h-[19px] w-[60px] shrink-0" viewBox="0 0 60 19">
          <path d="M4.500 0v19M32.500 0v19" stroke="#eee" />
          <path d="M15.500 4.500h6v4h-3l-1.500 1.500v-1.500h-1.500z" fill="none" stroke="#555" />
          <path d="M42 5.500h7M44 8h3" stroke="#555" />
          <text x="7.500" y="16.300" fontSize="4" fontWeight="700" fill="#666" fontFamily="Liberation Sans">FEEDBACK</text>
          <text x="40" y="16.300" fontSize="4" fontWeight="700" fill="#666" fontFamily="Liberation Sans">APPS</text>
        </svg>
      </div>
      <WorldMap />
    </div>
  );
}

function Rows({ rows, w }: { rows: [string, string][]; w: string }) {
  return (
    <dl className={`${w} text-[11px] leading-[16px] text-[#7d7d7d]`}>
      {rows.map(([k, v]) => (
        <div key={k} className="flex justify-between whitespace-nowrap">
          <dt className="font-bold">{k}</dt>
          <dd className="italic">{v}</dd>
        </div>
      ))}
    </dl>
  );
}

const tab = "h-[27px] rounded-t-[3px] border border-b-0 border-[#e2e2e2] bg-[#fafafa] text-center";

function Modal() {
  return (
    <div className="absolute left-[116px] top-[145px] flex h-[624px] w-[1136px] flex-col overflow-hidden border-x border-[#ddd] bg-white">
      <div className="flex h-[25px] shrink-0 items-center border-b border-[#e3e3e3] bg-[#f4f4f4] pl-[5px] pr-[6px]">
        <span className="text-[11px] font-bold tracking-[0.08px] text-[#8a8a8a]">Test Record Details</span>
        <X className="ml-auto size-[16px] text-[#666]" strokeWidth={2.200} />
      </div>
      <div className="ml-[16px] mt-[10px] flex h-[588px] w-[1102px] flex-col">
        <div className="flex h-[32px] shrink-0 items-end border-b-2 border-[#dedede] bg-[#f4f4f4] text-[12px] font-bold leading-[27px] text-[#333]">
          <span className="h-[30px] w-[58px] bg-[#f1f1f1] pl-[8px] pt-[2px] tracking-[0.050px]">Details</span>
          <span className={`${tab} w-[52px]`}>Notes</span>
          <span className={`${tab} ml-[2px] w-[62px]`}>Results</span>
          <span className={`${tab} ml-[2px] w-[41px]`}>Edit</span>
        </div>
        <div className="flex min-h-0 flex-1 overflow-hidden border-x border-b border-[#d8d8d8]">
          <div className="flex flex-1 flex-col px-[16px] pt-[5px] tracking-[0.1px]">
            <div className="h-[219px] shrink-0 border border-[#c8c8c8] pl-[16px] pt-[16px]">
              <h2 className="text-[15px] font-bold leading-[18px] tracking-[0.130px] text-[#4c4c4c]">SMM_Test_FRI</h2>
              <p className="mt-[6px] text-[11px] leading-[14px] text-[#7d7d7d]">
                https://mapbeta.gvslabs.com/?profile=maplarge&amp;mlSession=true&amp;mlSessionTestMode=true&amp;mlSessionId=repo_-_nga_-_29iknct4qg3
              </p>
              <div className="mt-[14px] flex">
                <div className="w-[237px]">
                  <h3 className="text-[14px] font-bold leading-[19px] tracking-normal text-[#4c4c4c] underline">Details</h3>
                  <Rows w="w-[173px]" rows={[["Test Record Id:", "vlcyjd3no56"], ["Created:", "6/8/2018, 5:40:54 PM"], ["Modified:", "6/8/2018, 5:40:54 PM"]]} />
                </div>
                <div>
                  <h3 className="text-[14px] font-bold leading-[19px] tracking-[0.050px] text-[#4c4c4c] underline">Settings</h3>
                  <Rows
                    w="w-[156px]"
                    rows={[["Wait for Event \"Done\":", "true"], ["Test Timeout:", "Default"], ["Resource Interval:", "Default"], ["Viewport Width:", "1395"], ["Viewport Height:", "671"], ["Order:", "0"]]}
                  />
                </div>
              </div>
            </div>
            <div className="mt-[16px] flex h-[500px] shrink-0 border border-[#c8c8c8] pl-[16px]">
              <div className="w-[497px] pt-[16px]">
                <h2 className="text-[15px] font-bold leading-[18px] text-[#4c4c4c]">Test Variations (1)</h2>
                <div className="mt-[6px] text-[12px] font-bold leading-[14px] text-[#9aa5b9]">DEFAULT</div>
                <div className="mt-[9px] h-[22px] w-[481px] bg-[#e8e8e8] text-center text-[12px] font-bold leading-[14px] text-[#4c4c4c]">Base</div>
                <MapShot />
              </div>
              <div className="pt-[40px]">
                <h2 className="text-[14px] font-bold leading-[18px] text-[#4c4c4c]">SMM_Test_FRI (Chrome)</h2>
                <p className="mt-[7px] text-[11px] leading-[12px] text-[#7d7d7d] underline">
                  https://mapbeta.gvslabs.com/?
                  <br />
                  profile=maplarge&amp;mlSession=true&amp;mlSessionTestMode=true&amp;mlSessionId=repo_-_nga_-_29iknct4qg3
                </p>
                <div className="mt-[6px] flex text-[11px] leading-[16px] text-[#7d7d7d]">
                  <b className="w-[109px]">Test Variation Id:</b>
                  <i>da39a3ee5e6b4b0d3255bfef95601890afd80709_chrome</i>
                </div>
              </div>
            </div>
          </div>
          <div className="w-[15px] shrink-0 border-l border-[#e0e0e0] bg-[#fafafa] pl-[3px] pt-[72px]">
            <div className="h-[449px] w-[8px] rounded-full bg-[#c1c1c1]" />
          </div>
        </div>
      </div>
    </div>
  );
}

export default function App() {
  return (
    <div className="relative flex h-[793px] w-[1369px] flex-col overflow-hidden bg-white font-['Liberation_Sans',Arial,sans-serif]">
      <Chrome />
      <Page />
      <div className="absolute left-[116px] top-[145px] h-[624px] w-[1136px] shadow-[0_0_10px_#0004]" />
      <Modal />
      <footer className={`${ui} relative z-10 h-[24px] shrink-0 bg-[#06090c]`}>
        <div className="h-[18px] overflow-hidden whitespace-nowrap border-t border-[#aaa] bg-[#ececec] text-[11px] leading-[17px] tracking-[-0.062px] text-black">
          {'https://automationrunner.maplarge.com/Api/ProcessDirect?request=%7B"action"%3A"automationrunner%2Fgetscreenshot"%2C"automationrunner"%3A%7B"group"%3A%7B"name"%3A"NGA Smoke Test"%2C"isRepositoryRecord"%3Atrue%2C"repositoryExtensi...'}
        </div>
        <div className="flex h-[6px] overflow-hidden pl-[967px]">
          <span className="w-[46px] bg-[#999] text-center text-[9px] leading-[9px] text-[#333]">RTF</span>
          <i className="ml-[170px] h-[2px] w-[58px] bg-[#1d5268]" />
        </div>
      </footer>
    </div>
  );
}
